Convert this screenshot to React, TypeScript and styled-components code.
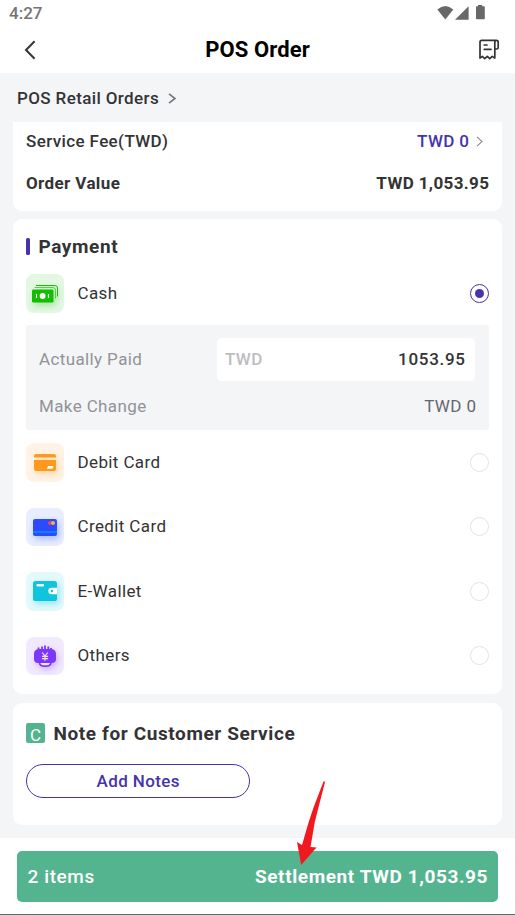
import React from 'react';
import styled, { createGlobalStyle, css } from 'styled-components';

const GlobalStyle = createGlobalStyle`
  * { box-sizing: border-box; }
  body { margin: 0; background: #fff; font-family: Roboto, sans-serif; color: #333; }
`;

const purple = '#4733ab';
const green = '#53b48f';

const Screen = styled.div`
  position: relative;
  width: 515px;
  height: 915px;
  display: flex;
  flex-direction: column;
  overflow: hidden;
  background: #f4f5f7;
  border-bottom: 1px solid #6b6869;
`;

const Text = styled.span<{ $size?: number; $weight?: number; $color?: string; $track?: number }>`
  font-size: ${(p) => p.$size ?? 17}px;
  font-weight: ${(p) => p.$weight ?? 400};
  color: ${(p) => p.$color ?? '#333335'};
  letter-spacing: ${(p) => p.$track ?? 0.38}px;
  margin-right: ${(p) => -(p.$track ?? 0.38)}px;
  line-height: 1;
  white-space: nowrap;
`;

const StatusBar = styled.div`
  height: 27px;
  flex: none;
  display: flex;
  justify-content: space-between;
  padding: 5px 28px 0 9px;
  background: #fff;
`;

const NavBar = styled.header`
  height: 46px;
  flex: none;
  display: grid;
  grid-template-columns: 60px 1fr 60px;
  align-items: center;
  justify-items: center;
  background: #fff;
  svg:last-child { margin-left: 7px; }
`;

const Breadcrumb = styled.div`
  height: 49px;
  flex: none;
  display: flex;
  align-items: center;
  gap: 9px;
  padding: 1px 17px 0;
`;

const Card = styled.section<{ $h: number; $flatTop?: boolean }>`
  height: ${(p) => p.$h}px;
  flex: none;
  margin: 0 13px;
  padding: 0 13px;
  background: #fff;
  border-radius: ${(p) => (p.$flatTop ? '0 0 9px 9px' : '9px')};
`;

const Gap = styled.div<{ $h: number }>`
  height: ${(p) => p.$h}px;
  flex: none;
`;

const Row = styled.div<{ $h: number }>`
  height: ${(p) => p.$h}px;
  display: flex;
  align-items: center;
  justify-content: space-between;
`;

const Value = styled.div`
  display: flex;
  align-items: center;
  gap: 7px;
  padding-right: 6px;
`;

const CardTitle = styled.div`
  height: 55px;
  display: flex;
  align-items: center;
  gap: 8.5px;
`;

const Marker = styled.i`
  width: 4px;
  height: 17px;
  border-radius: 1.5px;
  background: ${purple};
`;

const Method = styled.div<{ $h: number }>`
  height: ${(p) => p.$h}px;
  display: grid;
  grid-template-columns: 38px 1fr 19px;
  column-gap: 13.5px;
  align-items: center;
`;

const IconTile = styled.div<{ $bg: string; $glow: string }>`
  width: 38px;
  height: 38.5px;
  border-radius: 8px;
  background: ${(p) => p.$bg};
  svg {
    display: block;
    filter: drop-shadow(2px 3px 3px ${(p) => p.$glow});
  }
`;

const Radio = styled.div<{ $on?: boolean }>`
  width: 19px;
  height: 19px;
  border-radius: 50%;
  border: 1px solid #e3e3e5;
  display: grid;
  place-items: center;
  ${(p) =>
    p.$on &&
    css`
      border-color: ${purple};
      &::after {
        content: '';
        width: 9px;
        height: 9px;
        border-radius: 50%;
        background: ${purple};
      }
    `}
`;

const CashPanel = styled.div`
  height: 105px;
  margin-bottom: 0.4px;
  padding: 11px 13px 0;
  background: #f4f5f7;
  border-radius: 3px;
`;

const AmountField = styled.div`
  width: 258px;
  height: 43px;
  margin-right: 1px;
  padding: 0 10px 0 8px;
  display: flex;
  align-items: center;
  justify-content: space-between;
  background: #fff;
  border-radius: 5px;
`;

const NoteBadge = styled.div`
  width: 19px;
  height: 20px;
  border-radius: 2px;
  background: ${green};
  display: flex;
  justify-content: center;
  padding-top: 4px;
`;

const NoteTitle = styled.div`
  height: 60px;
  display: flex;
  align-items: center;
  gap: 8.5px;
`;

const AddButton = styled.button`
  width: 224px;
  height: 34px;
  padding: 0;
  margin-top: 1px;
  border: 1px solid ${purple};
  border-radius: 18px;
  background: #fff;
  font-family: inherit;
  display: flex;
  align-items: center;
  justify-content: center;
`;

const Footer = styled.footer`
  flex: 1;
  background: #fff;
  padding: 13px 17px 0;
`;

const Settle = styled.div`
  height: 51px;
  padding: 0 10.5px;
  border-radius: 5px;
  background: ${green};
  display: flex;
  align-items: center;
  justify-content: space-between;
`;

const Pointer = styled.svg`
  position: absolute;
  left: 290px;
  top: 775px;
`;

const StatusIcons = () => (
  <svg width="52" height="18" viewBox="435 5 52 18" fill="#686868">
    <path d="M437.3 9.6 Q445.3 2.6 453.3 9.6 L445.3 19.6Z" />
    <path d="M455 19.8 L468.6 6.2 V19.8Z" />
    <path d="M476 7 q0-.8.8-.8 H478 V5 h4.2 v1.200 h1.800 q.8 0 .8.8 V18.400 q0 .8-.8.8 h-7.200 q-.8 0-.8-.8Z" />
  </svg>
);

const Back = () => (
  <svg width="12" height="20" viewBox="0 0 12 20" fill="none" stroke="#34343a" strokeWidth="2">
    <path d="M10.600 1.300 2 10l8.600 8.700" />
  </svg>
);

const Receipt = () => (
  <svg width="22" height="22" viewBox="478 39 22 22" fill="none" stroke="#333" strokeWidth="1.700" strokeLinejoin="round" strokeLinecap="round">
    <path d="M480 58.100V42q0-1.700 1.700-1.700H495.500M480 58.100l2.300-1.700 2.400 2.300 2.600-2.300 2.500 2.300 2.400-2.300 2.600 1.700V42.500q0-2.200 1.700-2.200t1.700 2V47.500q0 1.500-1.500 1.500H495" />
    <path d="M484.200 45h2.800M484.200 49.300h6.800" />
  </svg>
);

const Chevron = ({ w, h, color, stroke }: { w: number; h: number; color: string; stroke: number }) => (
  <svg width={w} height={h} viewBox={`0 0 ${w} ${h}`} fill="none" stroke={color} strokeWidth={stroke}>
    <path d={`M1 .8 L${w - 1} ${h / 2} L1 ${h - 0.8}`} />
  </svg>
);

const CashIcon = () => (
  <svg width="38" height="38" viewBox="0 0 38 38">
    <g fill="none" stroke="#13be00" strokeWidth="1">
      <path d="M10 11.500H29q2.500 0 2.500 2.500V22.500" />
      <path d="M8.500 13.500H27q2.500 0 2.500 2.500V24.500" opacity=".65" />
    </g>
    <rect x="6" y="15.500" width="21.500" height="13" rx="1.300" fill="#13be00" />
    <circle cx="16.600" cy="22" r="2.900" fill="#fff" />
    <path d="M10.500 20v4M22.500 20v4" stroke="#fff" strokeWidth="1.200" />
  </svg>
);

const DebitIcon = () => (
  <svg width="38" height="38" viewBox="0 0 38 38">
    <path d="M8 14.500V13q0-2 2-2H28q2 0 2 2v1.500Z M8 17H30v9q0 2-2 2H10q-2 0-2-2Z" fill="#ff991d" />
    <path d="M22 23h5.500l-1 2.800H21Z" fill="#fff" />
  </svg>
);

const CreditIcon = () => (
  <svg width="38" height="38" viewBox="0 0 38 38">
    <rect x="7" y="11" width="24" height="17" rx="2" fill="#2c4bff" />
    <path d="M7 23h24v2H7Z" fill="#0783fb" />
    <circle cx="24" cy="15" r="2" fill="#f04450" />
    <circle cx="27" cy="15" r="2" fill="#f5b04b" />
  </svg>
);

const WalletIcon = () => (
  <svg width="38" height="38" viewBox="0 0 38 38">
    <rect x="7" y="9" width="24" height="20" rx="2.600" fill="#0fc4dc" />
    <rect x="10.500" y="12" width="7.500" height="2.500" rx="1" fill="#fff" />
    <path d="M31 15.800H25.500a3.200 3.200 0 0 0 0 6.400H31Z" fill="#fff" />
    <circle cx="26" cy="19" r="1.200" fill="#0fc4dc" />
  </svg>
);

const OthersIcon = () => (
  <svg width="38" height="38" viewBox="0 0 38 38">
    <path d="M12.500 13.500V10.500M16 12V9.500M19 12V8.500M22.300 12V9.500M25 13V11" stroke="#7d37fb" strokeWidth="1.800" />
    <path d="M13.500 25.500q0 3.700 5.700 3.700t5.700-3.700" fill="#eee4ff" stroke="#7d37fb" strokeWidth="1.700" />
    <path d="M12 12H26q4 1.200 4 5v5q0 4-4.200 4H12q-4 0-4-4V17q0-3.800 4-5Z" fill="#7d37fb" />
    <path d="M16.200 15.500 19 19l2.800-3.500M19 19v4.800M16 19.300h6M16 21.600h6" fill="none" stroke="#eee4ff" strokeWidth="1.200" />
  </svg>
);

const others = [
  { name: 'Debit Card', Icon: DebitIcon, bg: '#fff3e6', glow: '#ff991d55' },
  { name: 'Credit Card', Icon: CreditIcon, bg: '#e8edff', glow: '#2c4bff50' },
  { name: 'E-Wallet', Icon: WalletIcon, bg: '#e4f9fc', glow: '#0fc4dc60' },
  { name: 'Others', Icon: OthersIcon, bg: '#f1e9ff', glow: '#7d37fb48' },
];

export default function App() {
  return (
    <>
      <GlobalStyle />
      <Screen>
        <StatusBar>
          <Text $weight={500} $color="#747474" $track={0}>4:27</Text>
          <StatusIcons />
        </StatusBar>
        <NavBar>
          <Back />
          <Text $size={22} $weight={700} $color="#000" $track={0.1}>POS Order</Text>
          <Receipt />
        </NavBar>
        <Breadcrumb>
          <Text $weight={500}>POS Retail Orders</Text>
          <Chevron w={8} h={11} color="#77777b" stroke={1.7} />
        </Breadcrumb>

        <Card $h={89} $flatTop>
          <Row $h={39}>
            <Text $weight={500}>Service Fee(TWD)</Text>
            <Value>
              <Text $weight={500} $color={purple}>TWD 0</Text>
              <Chevron w={7} h={11} color="#8a8a90" stroke={1.1} />
            </Value>
          </Row>
          <Row $h={45}>
            <Text $weight={700}>Order Value</Text>
            <Text $weight={700}>TWD 1,053.95</Text>
          </Row>
        </Card>
        <Gap $h={8} />

        <Card $h={475}>
          <CardTitle>
            <Marker />
            <Text $size={19} $weight={700} $track={0.6}>Payment</Text>
          </CardTitle>
          <Method $h={39}>
            <IconTile $bg="#e4f7e3" $glow="#13be0050"><CashIcon /></IconTile>
            <Text>Cash</Text>
            <Radio $on />
          </Method>
          <Gap $h={12} />
          <CashPanel>
            <Row $h={46}>
              <Text $color="#929298">Actually Paid</Text>
              <AmountField>
                <Text $weight={500} $color="#bdbdbf">TWD</Text>
                <Text $weight={500} $track={0.7}>1053.95</Text>
              </AmountField>
            </Row>
            <Row $h={48}>
              <Text $color="#929298">Make Change</Text>
              <Text $color="#66666b">TWD 0</Text>
            </Row>
          </CashPanel>
          {others.map(({ name, Icon, bg, glow }) => (
            <Method key={name} $h={64.4}>
              <IconTile $bg={bg} $glow={glow}><Icon /></IconTile>
              <Text>{name}</Text>
              <Radio />
            </Method>
          ))}
        </Card>
        <Gap $h={9} />

        <Card $h={122}>
          <NoteTitle>
            <NoteBadge><Text $color="#fff" $track={0}>C</Text></NoteBadge>
            <Text $size={19} $weight={700} $track={0.6}>Note for Customer Service</Text>
          </NoteTitle>
          <AddButton><Text $weight={500} $color={purple}>Add Notes</Text></AddButton>
        </Card>
        <Gap $h={13} />

        <Footer>
          <Settle>
            <Text $size={19} $weight={500} $color="#fff" $track={0.6}>2 items</Text>
            <Text $size={19} $weight={700} $color="#fff" $track={0.6}>Settlement TWD 1,053.95</Text>
          </Settle>
        </Footer>

        <Pointer width="42" height="92" viewBox="290 775 42 92">
          <path d="M323.500 781.500 Q324.800 780.800 324.900 782.500 L318.600 807 L314.800 822 L310.500 847 L316.500 847.400 L301.200 865 L297 842 L302 845 L309 821 L313.700 807Z" fill="#f11920" />
        </Pointer>
      </Screen>
    </>
  );
}
